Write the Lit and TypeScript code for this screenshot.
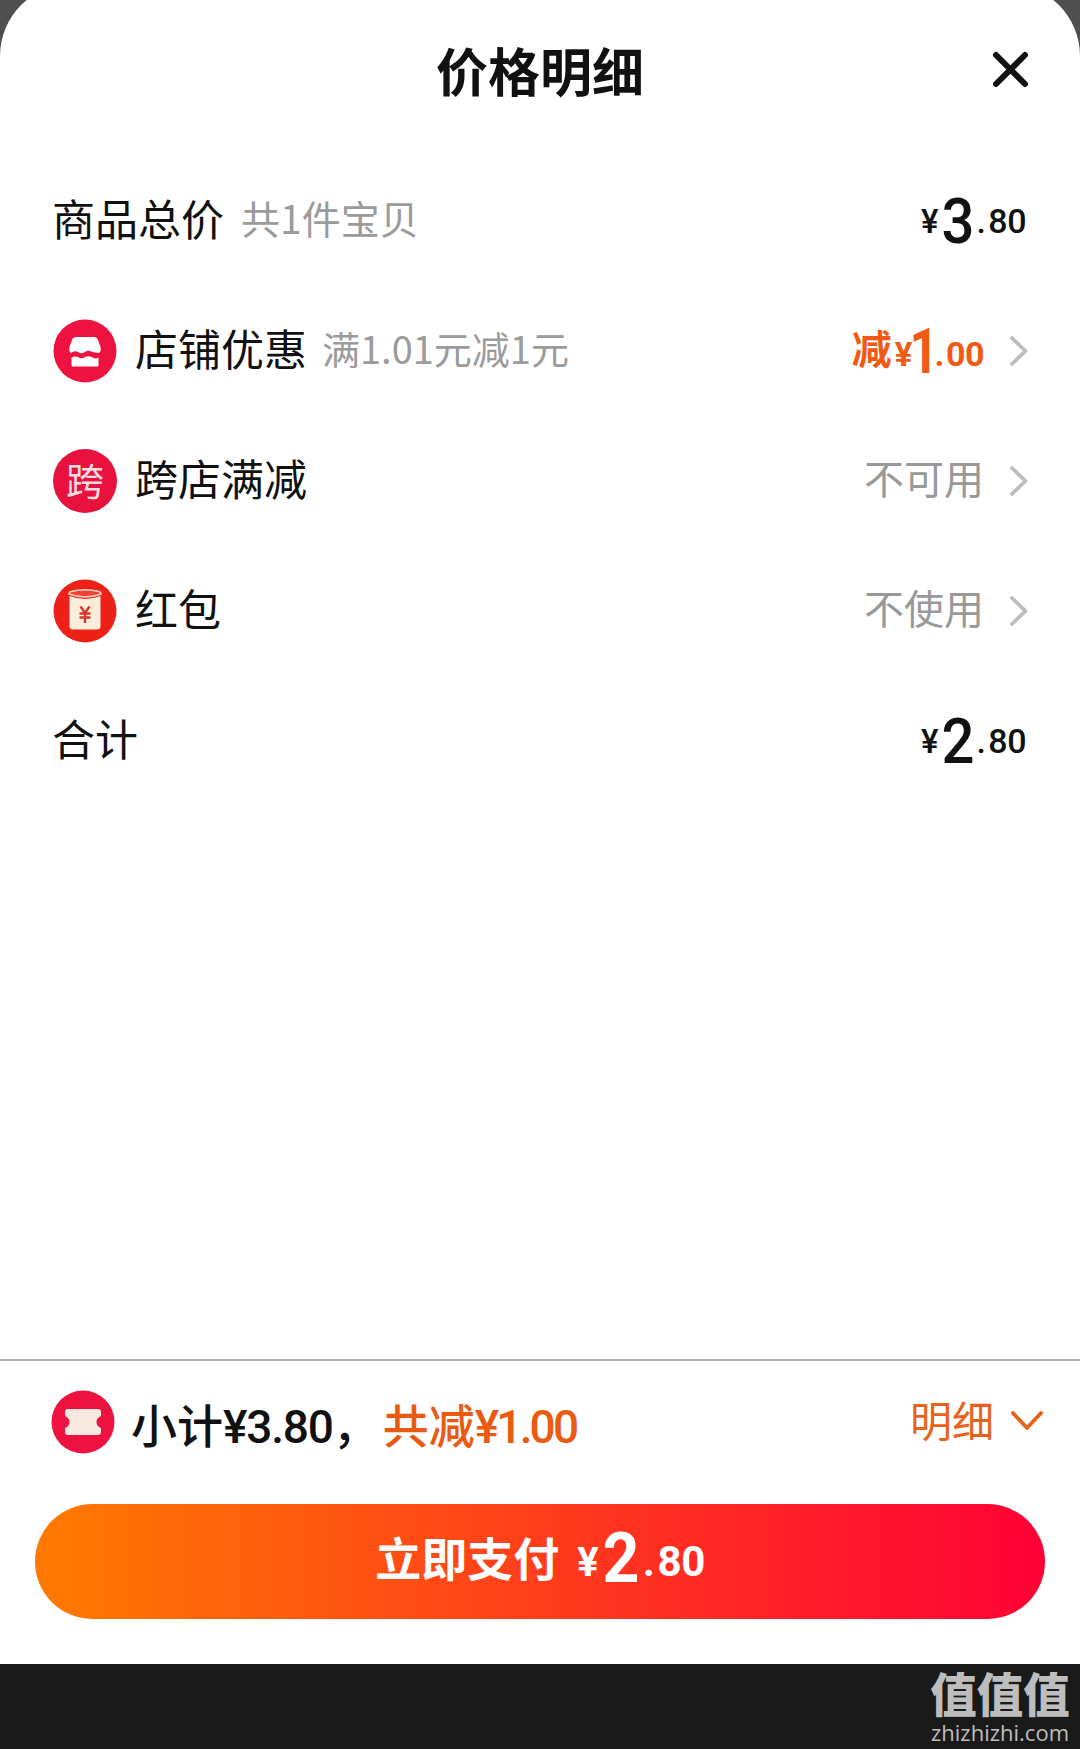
import { LitElement, html, css, svg } from "lit";
import { customElement } from "lit/decorators.js";

const chevron = html`<svg class="chev" width="18" height="30" viewBox="0 0 18 30">
  <path d="M2 2 L15.5 15 L2 28" fill="none" stroke="#bdbdbd" stroke-width="3.8" stroke-linecap="round" stroke-linejoin="round" />
</svg>`;

const storeIcon = svg`<svg class="icon" viewBox="0 0 64 64">
  <circle cx="32" cy="32" r="31.5" fill="#ee1240" />
  <path d="M23 18 H41 Q44 18 45 21 L47.5 28 Q48.5 32.5 46 34 Q42.5 33.5 39 33 Q35.5 30.5 32 33 Q28.5 35.5 25 33 Q21.5 31 18 34 Q15.5 32.5 16.5 28 L19 21 Q20 18 23 18 Z" fill="#fff" />
  <path d="M18.5 38.5 Q22 37 25 38 Q28.5 40.5 32 38 Q35.5 36.5 39 38 Q42 40.5 45.5 38.5 V46 Q45.5 47.5 44 47.5 H20 Q18.5 47.5 18.5 46 Z" fill="#fff" />
</svg>`;

const packetIcon = svg`<svg class="icon" viewBox="0 0 64 64">
  <circle cx="32" cy="32" r="31.5" fill="#ee2119" />
  <path d="M18 12.5 Q32 9 46 12.5 Q48 13 48 15 Q32 21 16 15 Q16 13 18 12.5 Z" fill="#f24033" stroke="#fbd8c0" stroke-width="1.4" />
  <path d="M16.5 17 Q32 23 47.5 17 V47 Q47.5 50.5 44 50.5 H20 Q16.5 50.5 16.5 47 Z" fill="#fdeeda" />
  <path d="M27.5 27.5 L32 34 L36.5 27.5 M26.5 34.5 H37.5 M26.5 38.5 H37.5 M32 34 V44" fill="none" stroke="#d9382c" stroke-width="2.4" />
</svg>`;

const ticketIcon = svg`<svg class="icon-small" viewBox="0 0 64 64">
  <circle cx="32" cy="32" r="31.5" fill="#ee1240" />
  <path d="M17 19 H47 Q50 19 50 22 V26 Q45.5 28 45.5 32 Q45.5 36 50 38 V42 Q50 45 47 45 H17 Q14 45 14 42 V38 Q18.5 36 18.5 32 Q18.5 28 14 26 V22 Q14 19 17 19 Z" fill="#f8e9e0" />
</svg>`;

@customElement("price-amount")
export class PriceAmount extends LitElement {
  static properties = { whole: { type: String }, cents: { type: String } };
  declare whole: string;
  declare cents: string;

  static styles = css`
    :host {
      display: inline-block;
      font-family: Roboto, "Liberation Sans", sans-serif;
      font-weight: 500;
      line-height: 1;
      white-space: nowrap;
    }
    :host([bold]) {
      font-weight: 700;
    }
    .yen {
      font-size: 33px;
      margin-right: 2px;
    }
    .big {
      display: inline-block;
      font-size: 63px;
      vertical-align: -7px;
      transform: scaleX(0.92);
      margin: 0 -1px;
    }
    .small {
      font-size: 34px;
      letter-spacing: -0.5px;
    }
    .dot {
      margin: 0 3px 0 2px;
    }
    /* the 1 sits in a full digit cell, pull its neighbours in */
    :host([tight]) .big {
      margin: 0 -9px 0 -8px;
      transform: scaleX(0.8);
    }
    :host([tight]) .dot {
      margin: 0 2px 0 1px;
    }
    :host([large]) .yen {
      font-size: 40px;
      margin-right: 3px;
    }
    :host([large]) .big {
      font-size: 70px;
      vertical-align: -6px;
    }
    :host([large]) .small {
      font-size: 42px;
    }
    :host([large]) .dot {
      margin: 0 3px 0 3px;
    }
  `;

  render() {
    return html`<span class="yen">¥</span><span class="big">${this.whole}</span
      ><span class="small"><span class="dot">.</span>${this.cents}</span>`;
  }
}

@customElement("app-root")
export class AppRoot extends LitElement {
  static styles = css`
    :host {
      display: block;
      font-family: "Noto Sans CJK SC", "Noto Sans", sans-serif;
      color: #111;
    }
    .page {
      height: 1749px;
      overflow: hidden;
      background: #4f4f4f;
      display: flex;
      flex-direction: column;
    }
    .panel {
      flex: 1;
      margin-top: -16px;
      background: #fff;
      border-radius: 72px 72px 0 0;
      display: flex;
      flex-direction: column;
    }
    .header {
      position: relative;
      height: 172px;
      box-sizing: border-box;
      padding-top: 49px;
      text-align: center;
      font-size: 52px;
      line-height: 74px;
      font-weight: 700;
    }
    .close {
      position: absolute;
      left: 991px;
      top: 66px;
    }
    .row {
      height: 130px;
      padding: 0 54px 0 52px;
      display: flex;
      align-items: center;
      font-size: 43px;
    }
    .row > span {
      padding-bottom: 8px;
    }
    .icon {
      width: 64px;
      height: 64px;
      margin: 0 18px 0 1px;
    }
    .cross {
      width: 64px;
      height: 64px;
      margin: 0 18px 0 1px;
      border-radius: 50%;
      background: #e9123f;
      color: #fbdde0;
      font-size: 38px;
      line-height: 60px;
      text-align: center;
    }
    .row > .note {
      margin-left: 17px;
      font-size: 39px;
      color: #9b9b9b;
    }
    .row > .note.wide {
      margin-left: 15px;
      font-size: 38px;
    }
    .right {
      margin-left: auto;
      display: flex;
      align-items: center;
    }
    .action {
      margin-right: -2px;
    }
    .muted {
      font-size: 40px;
      color: #999;
      padding-bottom: 8px;
    }
    .chev {
      margin-left: 26px;
    }
    .discount {
      display: flex;
      align-items: baseline;
      color: #f05a14;
    }
    .discount b {
      font-size: 40px;
      margin-right: 3px;
      transform: translateY(-2px);
    }
    .spacer {
      flex: 1;
    }
    .footer {
      border-top: 2px solid #b0b0b0;
    }
    .summary {
      height: 143px;
      box-sizing: border-box;
      padding: 29px 37px 0 51px;
      display: flex;
      align-items: flex-start;
    }
    .icon-small {
      width: 64px;
      height: 64px;
      margin-right: 16px;
    }
    .totals {
      font-size: 46px;
      font-weight: 500;
      line-height: 66px;
      white-space: nowrap;
    }
    .totals em {
      font-style: normal;
      margin-left: 4px;
      color: #ea5a10;
    }
    .num {
      font-family: Roboto, sans-serif;
      letter-spacing: -1.2px;
    }
    .totals em .num {
      letter-spacing: -2.8px;
    }
    .detail {
      margin-left: auto;
      display: flex;
      align-items: center;
      height: 56px;
      color: #e8621a;
      font-size: 42px;
    }
    .detail svg {
      margin: 6px 0 0 17px;
    }
    .pay {
      margin: 0 35px 45px;
      height: 115px;
      border-radius: 58px;
      background: linear-gradient(90deg, #ff7a00, #ff0036);
      color: #fff;
      display: flex;
      align-items: center;
      justify-content: center;
    }
    .pay strong {
      font-size: 46px;
      font-weight: 700;
      margin: 0 18px 12px 0;
    }
    .pay price-amount {
      margin-bottom: 8px;
    }
    .bar {
      height: 85px;
      background: #1a1a1a;
      display: flex;
      justify-content: flex-end;
      padding-right: 10px;
    }
    .mark {
      width: 140px;
      color: #bdbdbd;
      text-align: center;
      white-space: nowrap;
    }
    .mark b {
      display: block;
      font-size: 46.5px;
      line-height: 56px;
      font-weight: 900;
    }
    .mark span {
      display: block;
      font-family: "Open Sans", sans-serif;
      font-size: 22px;
      line-height: 24px;
    }
  `;

  render() {
    return html`<div class="page">
      <div class="panel">
        <div class="header">
          价格明细
          <svg class="close" width="40" height="40" viewBox="0 0 40 40">
            <path d="M5 5 L34 34 M34 5 L5 34" stroke="#111" stroke-width="6" stroke-linecap="round" />
          </svg>
        </div>
        <div class="row">
          <span>商品总价</span><span class="note">共1件宝贝</span>
          <price-amount class="right" whole="3" cents="80"></price-amount>
        </div>
        <div class="row">
          ${storeIcon}<span>店铺优惠</span><span class="note wide">满1.01元减1元</span>
          <div class="right action">
            <div class="discount"><b>减</b><price-amount bold tight whole="1" cents="00"></price-amount></div>
            ${chevron}
          </div>
        </div>
        <div class="row">
          <div class="cross">跨</div><span>跨店满减</span>
          <div class="right action"><span class="muted">不可用</span>${chevron}</div>
        </div>
        <div class="row">
          ${packetIcon}<span>红包</span>
          <div class="right action"><span class="muted">不使用</span>${chevron}</div>
        </div>
        <div class="row">
          <span>合计</span>
          <price-amount class="right" whole="2" cents="80"></price-amount>
        </div>
        <div class="spacer"></div>
        <div class="footer">
          <div class="summary">
            ${ticketIcon}
            <div class="totals">
              小计<span class="num">¥3.80</span>，<em>共减<span class="num">¥1.00</span></em>
            </div>
            <div class="detail">
              明细
              <svg width="32" height="22" viewBox="0 0 32 22">
                <path d="M2 3 L16 18 L30 3" fill="none" stroke="#e8621a" stroke-width="3.8" stroke-linecap="round" stroke-linejoin="round" />
              </svg>
            </div>
          </div>
          <div class="pay">
            <strong>立即支付</strong>
            <price-amount large bold whole="2" cents="80"></price-amount>
          </div>
        </div>
      </div>
      <div class="bar">
        <div class="mark"><b>值值值</b><span>zhizhizhi.com</span></div>
      </div>
    </div>`;
  }
}
